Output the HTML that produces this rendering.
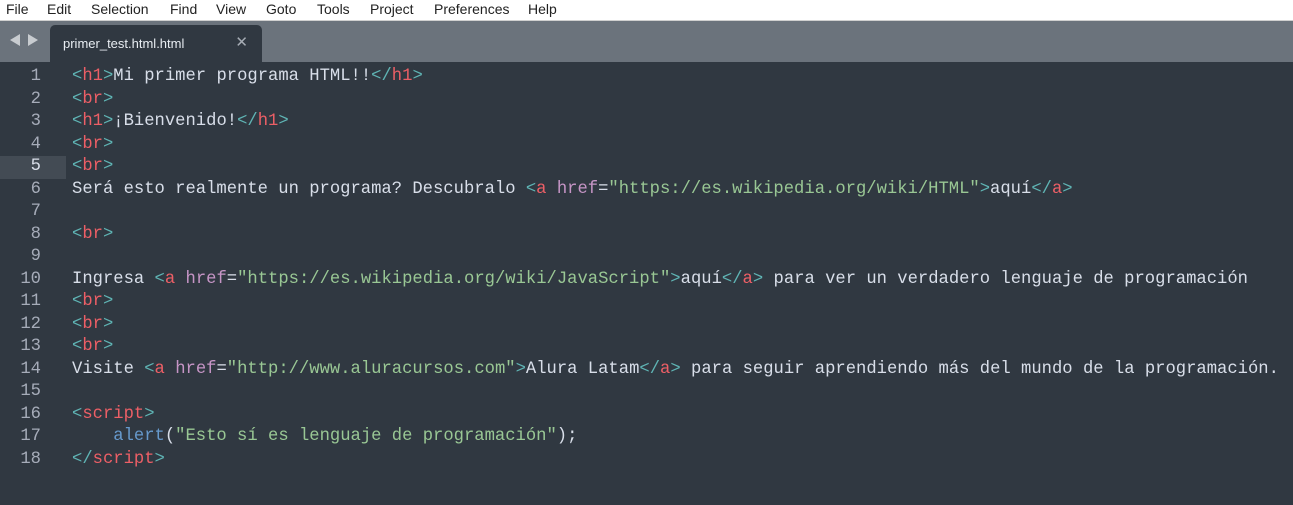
<!DOCTYPE html>
<html><head><meta charset="utf-8"><style>
body{margin:0;width:1293px;height:505px;background:#303841;overflow:hidden;font-family:"Liberation Sans",sans-serif}
#menu{height:20px;background:#fff;position:relative;font-size:14px;color:#222}
#menu span{position:absolute;top:1px}
#tabs{position:absolute;top:20px;left:0;width:1293px;height:41px;background:#6b737c;border-top:1px solid #d0d0d0}
#tab{position:absolute;left:50px;top:4px;width:212px;height:37px;background:#303841;border-radius:5px 5px 0 0;color:#e8edf2;font-size:13px}
#tab .t{position:absolute;left:13px;top:11px}
#tab .x{position:absolute;right:14px;top:8px;font-size:15px;color:#a6acb4}
.arr{position:absolute;top:13px;width:0;height:0;border-top:6px solid transparent;border-bottom:6px solid transparent}
#code{position:absolute;top:66px;left:0;font-family:"Liberation Mono",monospace;font-size:17.2px;line-height:22.5px;color:#d8dee9}
.l{height:22.5px;position:relative;white-space:pre}
.n{display:inline-block;width:41px;text-align:right;color:#a6acb9;margin-right:31px}
.cur{background:#434b54;position:absolute;left:0;top:0;width:66px;height:22.5px;z-index:-1}
.p{color:#5fb4b4}.g{color:#ec5f66}.a{color:#c695c6}.s{color:#99c794}.f{color:#6699cc}
</style></head><body>
<div id="menu"><span style="left:6px">File</span><span style="left:47px">Edit</span><span style="left:91px">Selection</span><span style="left:170px">Find</span><span style="left:216px">View</span><span style="left:266px">Goto</span><span style="left:317px">Tools</span><span style="left:370px">Project</span><span style="left:434px">Preferences</span><span style="left:528px">Help</span></div>
<div id="tabs">
<div class="arr" style="left:10px;border-right:10px solid #c8ccd0"></div>
<div class="arr" style="left:28px;border-left:10px solid #c8ccd0"></div>
<div id="tab"><span class="t">primer_test.html.html</span><span class="x">✕</span></div>
</div>
<div id="code"><div class="l"><span class="n">1</span><span class="p">&lt;</span><span class="g">h1</span><span class="p">&gt;</span>Mi primer programa HTML!!<span class="p">&lt;/</span><span class="g">h1</span><span class="p">&gt;</span></div><div class="l"><span class="n">2</span><span class="p">&lt;</span><span class="g">br</span><span class="p">&gt;</span></div><div class="l"><span class="n">3</span><span class="p">&lt;</span><span class="g">h1</span><span class="p">&gt;</span>¡Bienvenido!<span class="p">&lt;/</span><span class="g">h1</span><span class="p">&gt;</span></div><div class="l"><span class="n">4</span><span class="p">&lt;</span><span class="g">br</span><span class="p">&gt;</span></div><div class="l"><div class="cur"></div><span class="n" style="color:#d8dee9">5</span><span class="p">&lt;</span><span class="g">br</span><span class="p">&gt;</span></div><div class="l"><span class="n">6</span>Será esto realmente un programa? Descubralo <span class="p">&lt;</span><span class="g">a</span> <span class="a">href</span>=<span class="s">"https://es.wikipedia.org/wiki/HTML"</span><span class="p">&gt;</span>aquí<span class="p">&lt;/</span><span class="g">a</span><span class="p">&gt;</span></div><div class="l"><span class="n">7</span></div><div class="l"><span class="n">8</span><span class="p">&lt;</span><span class="g">br</span><span class="p">&gt;</span></div><div class="l"><span class="n">9</span></div><div class="l"><span class="n">10</span>Ingresa <span class="p">&lt;</span><span class="g">a</span> <span class="a">href</span>=<span class="s">"https://es.wikipedia.org/wiki/JavaScript"</span><span class="p">&gt;</span>aquí<span class="p">&lt;/</span><span class="g">a</span><span class="p">&gt;</span> para ver un verdadero lenguaje de programación</div><div class="l"><span class="n">11</span><span class="p">&lt;</span><span class="g">br</span><span class="p">&gt;</span></div><div class="l"><span class="n">12</span><span class="p">&lt;</span><span class="g">br</span><span class="p">&gt;</span></div><div class="l"><span class="n">13</span><span class="p">&lt;</span><span class="g">br</span><span class="p">&gt;</span></div><div class="l"><span class="n">14</span>Visite <span class="p">&lt;</span><span class="g">a</span> <span class="a">href</span>=<span class="s">"http://www.aluracursos.com"</span><span class="p">&gt;</span>Alura Latam<span class="p">&lt;/</span><span class="g">a</span><span class="p">&gt;</span> para seguir aprendiendo más del mundo de la programación.</div><div class="l"><span class="n">15</span></div><div class="l"><span class="n">16</span><span class="p">&lt;</span><span class="g">script</span><span class="p">&gt;</span></div><div class="l"><span class="n">17</span>    <span class="f">alert</span>(<span class="s">"Esto sí es lenguaje de programación"</span>);</div><div class="l"><span class="n">18</span><span class="p">&lt;/</span><span class="g">script</span><span class="p">&gt;</span></div></div>
</body></html>
